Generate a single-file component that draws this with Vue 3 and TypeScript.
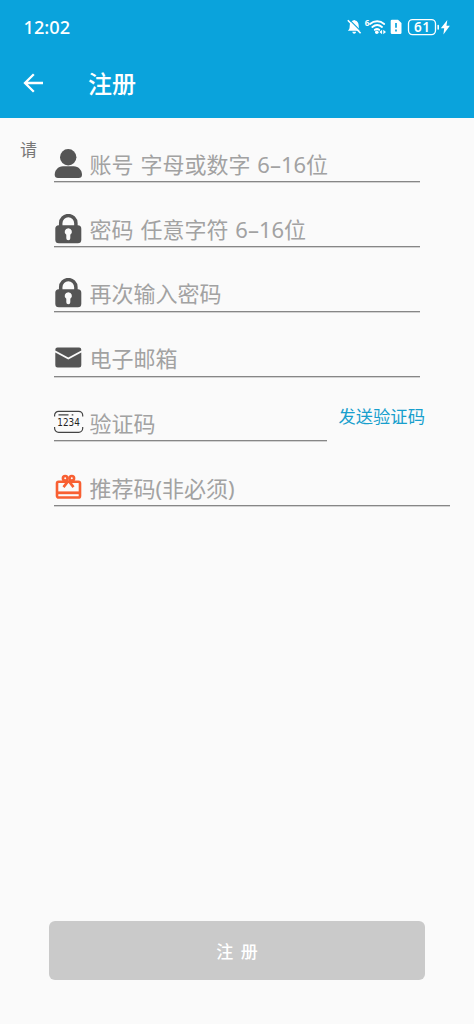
<script setup lang="ts">
import { reactive } from 'vue'

type IconName = 'user' | 'lock' | 'mail' | 'code' | 'gift'

interface Field {
  key: string
  icon: IconName
  type: string
  placeholder: string
  size: 'normal' | 'short' | 'wide'
  action?: string
}

const fields: Field[] = [
  { key: 'account', icon: 'user', type: 'text', placeholder: '账号 字母或数字 6–16位', size: 'normal' },
  { key: 'password', icon: 'lock', type: 'password', placeholder: '密码 任意字符 6–16位', size: 'normal' },
  { key: 'confirm', icon: 'lock', type: 'password', placeholder: '再次输入密码', size: 'normal' },
  { key: 'email', icon: 'mail', type: 'email', placeholder: '电子邮箱', size: 'normal' },
  { key: 'code', icon: 'code', type: 'text', placeholder: '验证码', size: 'short', action: '发送验证码' },
  { key: 'referral', icon: 'gift', type: 'text', placeholder: '推荐码(非必须)', size: 'wide' },
]

const form = reactive<Record<string, string>>({})
</script>

<template>
  <div class="screen">
    <header class="top">
      <div class="status">
        <span class="time">12:02</span>
        <svg class="indicators" width="108" height="22" viewBox="0 0 108 22" fill="none">
          <path d="M1.800 14.800c1.600-1.300 1.900-2.600 1.900-5 0-2.900 1.500-4.800 3.500-5.200a1.100 1.100 0 0 1 2 0c2.100.4 3.500 2.300 3.500 5.200 0 2.400.4 3.700 2 5zM6.300 15.700h3.800c-.2 1.300-.9 2-1.900 2s-1.700-.7-1.900-2z" fill="#fff" />
          <path d="M2.800 3.200l13 13" stroke="#0aa3dc" stroke-width="1.200" />
          <path d="M1.800 4.200l12.800 13" stroke="#fff" stroke-width="1.600" />
          <text x="18.700" y="9.700" class="tiny">6</text>
          <g stroke="#fff" stroke-width="1.900" stroke-linecap="round">
            <path d="M24 7.900c4.300-3.500 10-3.500 14.200 0" />
            <path d="M26.300 11c3-2.500 6.700-2.500 9.700 0" />
            <path d="M28.800 13.800c1.400-1.100 3-1.100 4.400 0" />
          </g>
          <circle cx="30.800" cy="16.200" r="1.800" fill="#fff" />
          <path d="M33.400 16l2.700-2.200v4.400zM40 16l-2.700-2.200v4.400z" fill="#fff" />
          <path d="M46 3.800h6l3.500 3.100v9.800a1.300 1.300 0 0 1-1.300 1.300H46a1.300 1.300 0 0 1-1.300-1.300V5.100A1.300 1.300 0 0 1 46 3.800z" fill="#fff" />
          <path d="M50 7v4.800M50 13.600v1.900" stroke="#0aa3dc" stroke-width="1.700" />
          <rect x="62.500" y="3.600" width="27" height="15" rx="4" stroke="#fff" stroke-width="1.300" />
          <text x="76.200" y="16" text-anchor="middle" class="charge">61</text>
          <path d="M92.200 9.500v3.500" stroke="#fff" stroke-width="1.600" stroke-linecap="round" />
          <path d="M101.300 4l-6.500 8.200h3.400l-.8 6.300 6.500-8.700h-3.400z" fill="#fff" />
        </svg>
      </div>
      <div class="bar">
        <button class="back" type="button" aria-label="返回">
          <svg width="20" height="20" viewBox="0 0 20 20" fill="none" stroke="#fff" stroke-width="2.300">
            <path d="M20 10H2M10.800 1.200L2 10l8.800 8.800" />
          </svg>
        </button>
        <h1>注册</h1>
      </div>
    </header>

    <main class="body">
      <span class="hint">请</span>
      <form class="fields" @submit.prevent>
        <div v-for="field in fields" :key="field.key" class="row">
          <label class="field" :class="field.size">
            <svg v-if="field.icon === 'user'" class="icon" viewBox="0 0 30 30" fill="#555">
              <circle cx="14.200" cy="8.200" r="8.200" />
              <path d="M9 17.200h10.600c5.200 0 8.400 4.200 8.400 8.500 0 2.100-1.300 3.300-3.300 3.300H4c-2 0-3.300-1.200-3.300-3.300 0-4.300 3.200-8.500 8.300-8.500z" />
            </svg>
            <svg v-else-if="field.icon === 'lock'" class="icon" viewBox="0 0 30 30">
              <path d="M6.700 12.500V9.200a7.600 7.600 0 0 1 15.200 0v3.300" fill="none" stroke="#555" stroke-width="3.500" />
              <rect x="1.300" y="11.200" width="26" height="18" rx="3.500" fill="#555" />
              <path d="M14.300 14.200a3.600 3.600 0 0 1 2 6.600v3.500a2 2 0 0 1-4 0v-3.500a3.600 3.600 0 0 1 2-6.600z" fill="#fafafa" />
            </svg>
            <svg v-else-if="field.icon === 'mail'" class="icon" viewBox="0 0 30 30" fill="#555">
              <path d="M3.500 4.600h21.600a2.200 2.200 0 0 1 2.200 2.200v.8L14.300 14.400 1.300 7.600V6.800a2.200 2.200 0 0 1 2.200-2.200z" />
              <path d="M1.300 9.600l13 6.800 13-6.800v12.600a2.300 2.300 0 0 1-2.300 2.300H3.600a2.300 2.300 0 0 1-2.300-2.300z" />
            </svg>
            <svg v-else-if="field.icon === 'code'" class="icon" viewBox="0 0 30 30" fill="none" stroke="#444" stroke-width="1.200">
              <path d="M.6 8.500V7.300a4 4 0 0 1 4-4h20.100a4 4 0 0 1 4 4v1.200M.6 19v1.300a4 4 0 0 0 4 4h20.100a4 4 0 0 0 4-4V19M4.500 6.800h10M17.700 6.800h1.600" />
              <text x="14.600" y="17.900" text-anchor="middle" textLength="22.500" lengthAdjust="spacingAndGlyphs" class="digits">1234</text>
            </svg>
            <svg v-else class="icon" viewBox="0 0 30 30" fill="none" stroke="#f85f32" stroke-width="2.600">
              <rect x="3" y="8.700" width="23" height="15.800" rx="1.600" />
              <path d="M3 19.800h23" stroke-width="2.800" />
              <circle cx="11.200" cy="5.300" r="2.300" />
              <circle cx="17.800" cy="5.300" r="2.300" />
              <path d="M14.500 7.600l-5 6.500M14.500 7.600l5 6.500" />
            </svg>
            <input v-model="form[field.key]" :type="field.type" :placeholder="field.placeholder" />
          </label>
          <button v-if="field.action" class="send" type="button">{{ field.action }}</button>
        </div>
      </form>
    </main>

    <footer class="bottom">
      <button class="submit" type="button">注&nbsp; 册</button>
    </footer>
  </div>
</template>

<style>
html,
body {
  margin: 0;
  background: #fafafa;
}
</style>

<style scoped>
.screen {
  box-sizing: border-box;
  display: flex;
  flex-direction: column;
  height: 1024px;
  width: 474px;
  background: #fafafa;
  font-family: "Noto Sans CJK SC", "Noto Sans", sans-serif;
}

button,
input {
  border: 0;
  padding: 0;
  margin: 0;
  background: none;
  font-family: inherit;
}

.top {
  height: 117.500px;
  flex: none;
  background: #0aa3dc;
  color: #fff;
}

.status {
  display: flex;
  justify-content: space-between;
  align-items: center;
  height: 54px;
  padding: 0 20px 0 23.500px;
}

.time {
  font-family: "Noto Sans", sans-serif;
  font-size: 18.200px;
  font-weight: 500;
  line-height: 22px;
}

.indicators {
  display: block;
}

.tiny {
  font: 700 8px "Noto Sans", sans-serif;
  fill: #fff;
}

.charge {
  font: 600 13.500px "Noto Sans", sans-serif;
  letter-spacing: .4px;
  fill: #fff;
}

.bar {
  display: flex;
  align-items: center;
  height: 58px;
  padding-left: 23px;
}

.back {
  display: flex;
  width: 20px;
}

h1 {
  margin: 0 0 0 45px;
  font-size: 24px;
  font-weight: 500;
  line-height: 32px;
}

.body {
  display: flex;
  flex: 1;
  align-items: flex-start;
  padding-left: 20px;
}

.hint {
  width: 34px;
  padding-top: 19.500px;
  color: #777;
  font-size: 17px;
  line-height: 24px;
}

.fields {
  flex: 1;
}

.row {
  display: flex;
  align-items: flex-end;
  height: 64.800px;
}

.field {
  box-sizing: border-box;
  display: flex;
  align-items: flex-end;
  width: 366px;
  height: 36px;
  border-bottom: 1px solid #868686;
  box-shadow: 0 1px 0 #d2d2d2;
}

.field.short {
  width: 273px;
}

.field.wide {
  width: 395.500px;
}

.icon {
  display: block;
  flex: none;
  width: 30px;
  height: 30px;
  margin-bottom: 2.500px;
}

.digits {
  font: 10.300px "DejaVu Sans", sans-serif;
  fill: #222;
  stroke: none;
}

input {
  flex: 1;
  min-width: 0;
  height: 32px;
  margin: 0 0 1.500px 5.500px;
  outline: none;
  color: #333;
  font-family: "Noto Sans", "Noto Sans CJK SC", sans-serif;
  font-size: 22px;
  font-weight: 400;
  word-spacing: 1.200px;
}

input::placeholder {
  color: #a2a2a2;
  opacity: 1;
}

.send {
  align-self: flex-end;
  margin: 0 0 13px 11.500px;
  color: #189fcd;
  font-size: 17.300px;
  line-height: 24px;
}

.bottom {
  flex: none;
  padding: 0 49px 44px;
}

.submit {
  display: block;
  width: 376px;
  height: 59px;
  border-radius: 6px;
  background: #cacaca;
  color: #fff;
  font-size: 17px;
  font-weight: 500;
}
</style>
